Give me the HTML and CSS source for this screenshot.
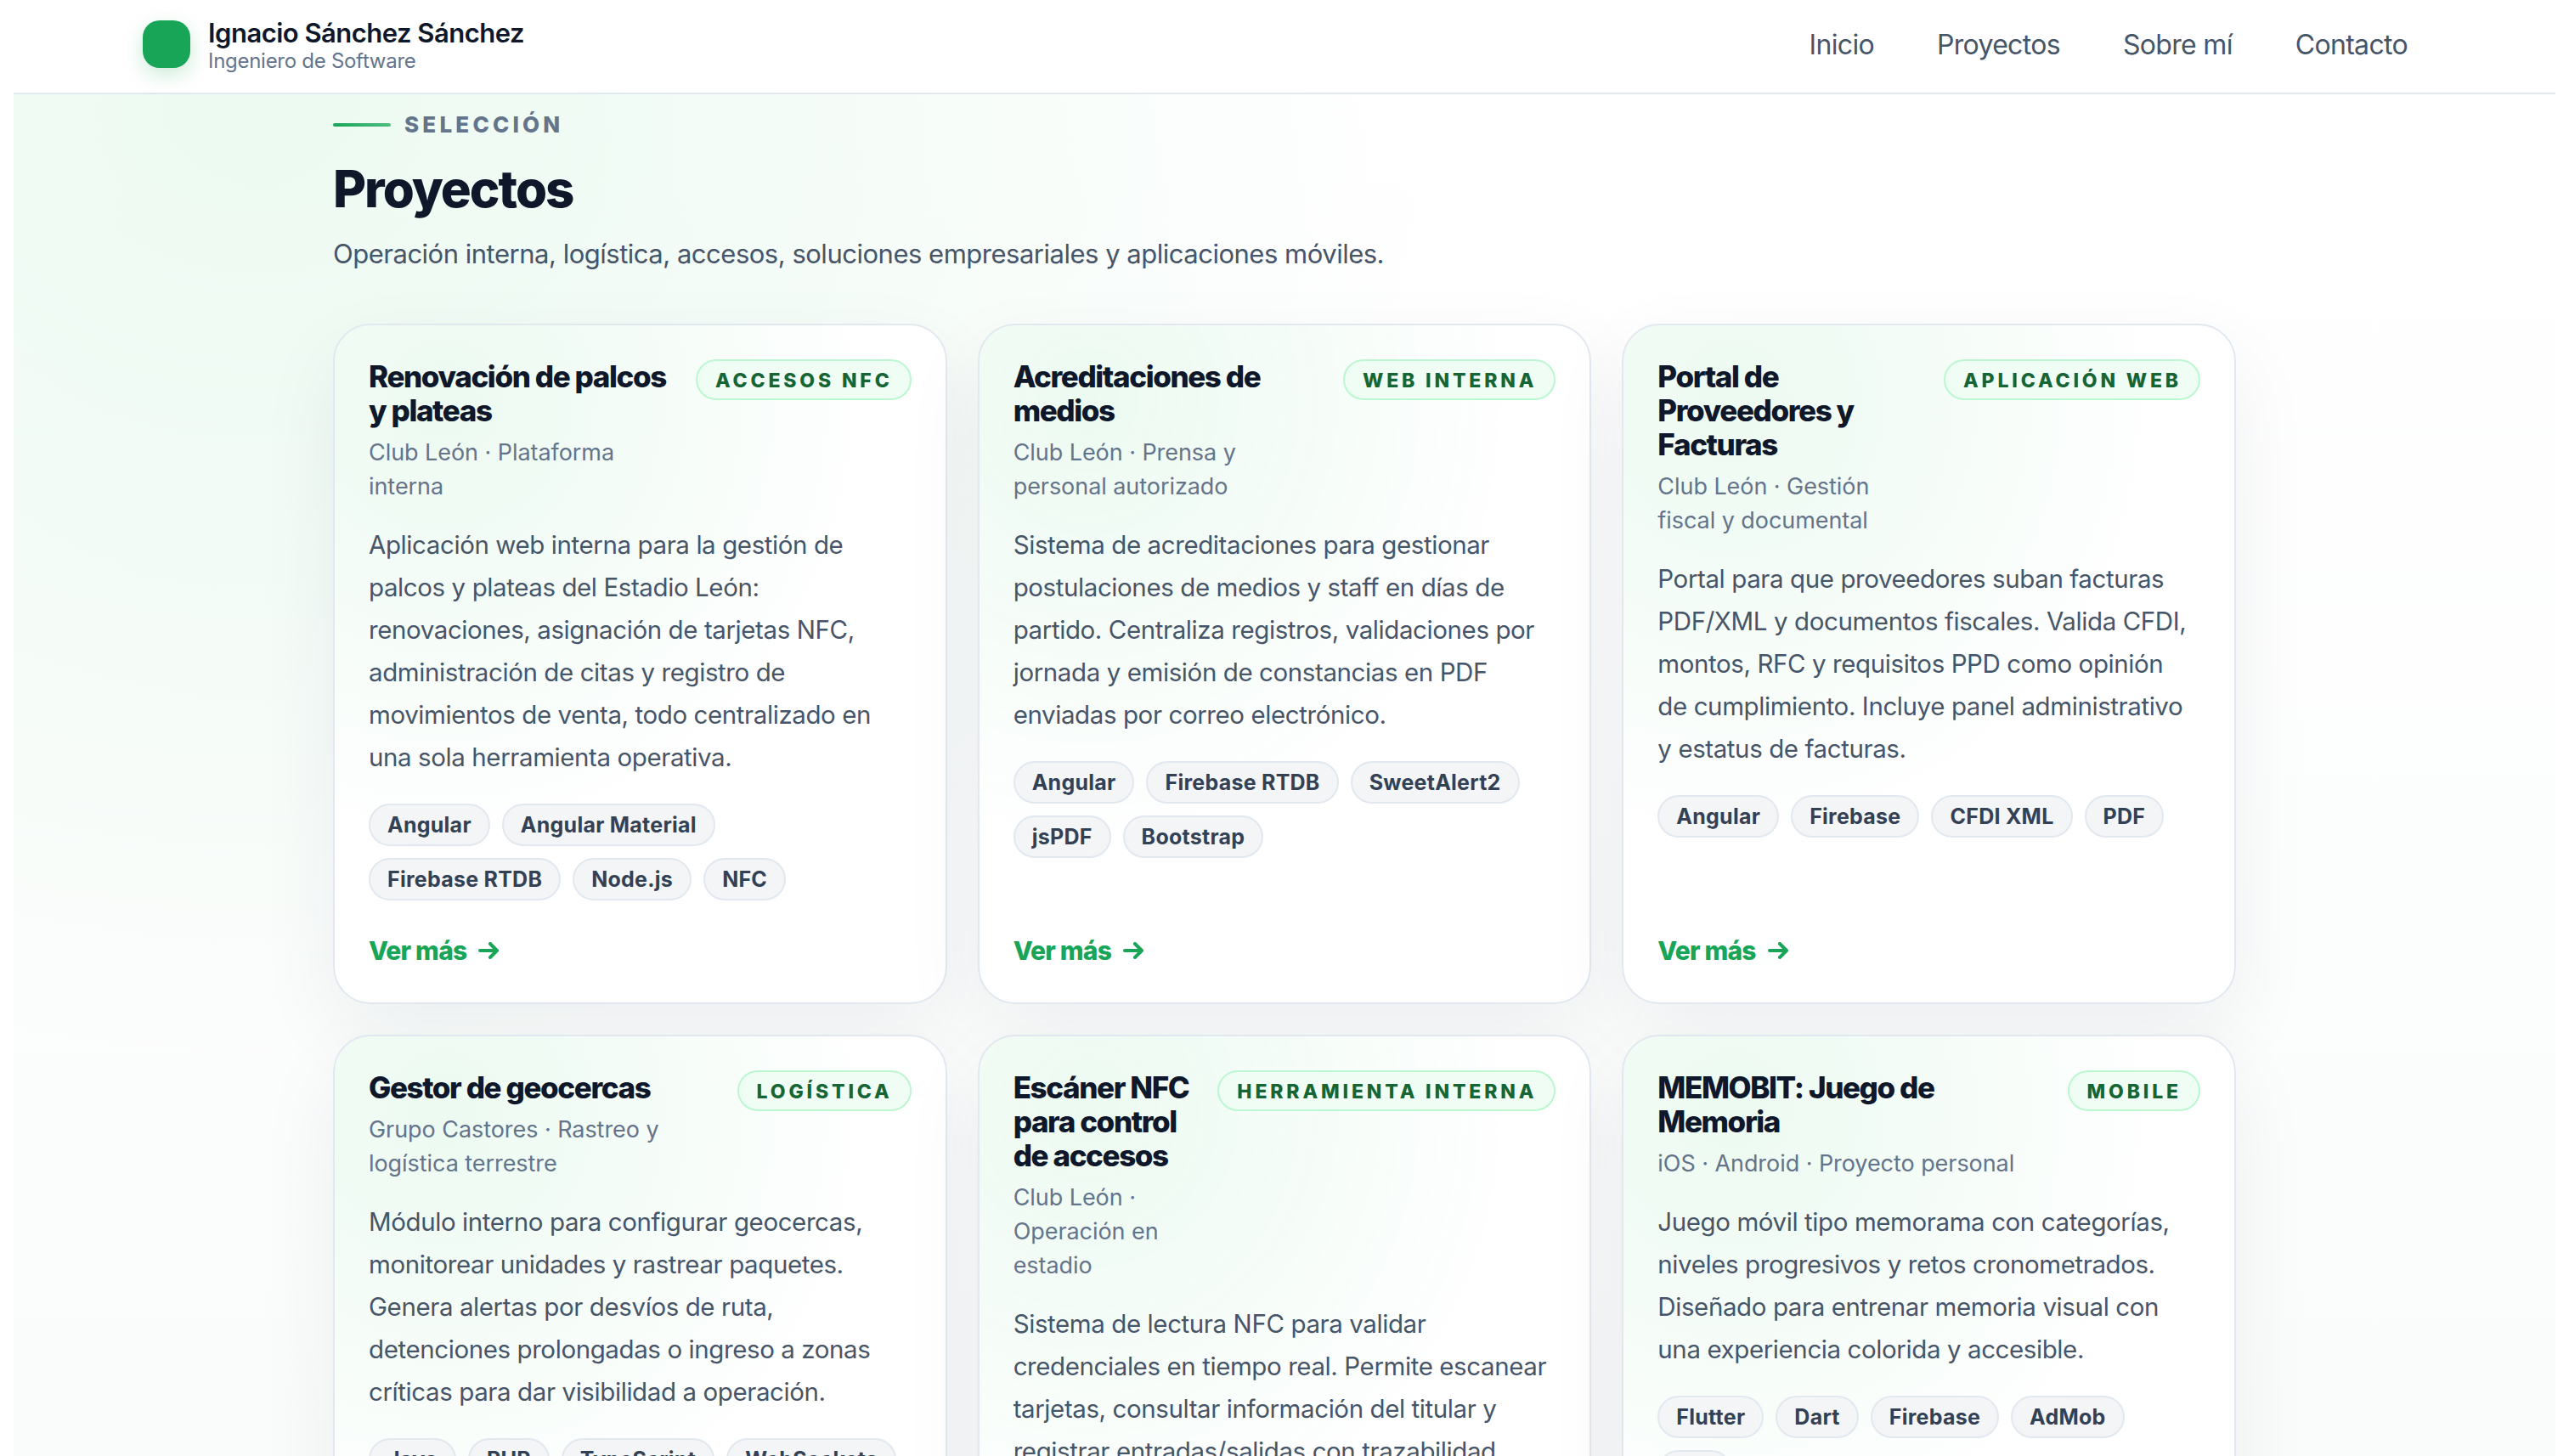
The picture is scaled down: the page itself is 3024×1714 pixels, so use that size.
FILE: index.html
```html
<!DOCTYPE html>
<html lang="es">
<head>
  <meta charset="UTF-8">
  <meta name="viewport" content="width=device-width, initial-scale=1.0">
  <title>Ignacio Sánchez Sánchez</title>
  <link rel="stylesheet" href="styles.css">
</head>
<body>
  <header class="header">
    <div class="brand">
      <span class="logo"></span>
      <div class="brand-text">
        <div class="brand-name">Ignacio Sánchez Sánchez</div>
        <div class="brand-role">Ingeniero de Software</div>
      </div>
    </div>
    <nav class="nav">
      <a href="#inicio">Inicio</a>
      <a href="#proyectos">Proyectos</a>
      <a href="#sobre-mi">Sobre mí</a>
      <a href="#contacto">Contacto</a>
    </nav>
  </header>

  <main class="main">
    <section class="container" id="proyectos">
      <div class="eyebrow">SELECCIÓN</div>
      <h2 class="title">Proyectos</h2>
      <p class="lead">Operación interna, logística, accesos, soluciones empresariales y aplicaciones móviles.</p>

      <div class="grid">
        <article class="card">
          <div class="card-top">
            <div>
              <h3>Renovación de palcos<br>y plateas</h3>
              <p class="meta">Club León · Plataforma<br>interna</p>
            </div>
            <span class="badge">ACCESOS NFC</span>
          </div>
          <p class="desc">Aplicación web interna para la gestión de<br>palcos y plateas del Estadio León:<br>renovaciones, asignación de tarjetas NFC,<br>administración de citas y registro de<br>movimientos de venta, todo centralizado en<br>una sola herramienta operativa.</p>
          <div class="chips">
            <span>Angular</span><span>Angular Material</span><span>Firebase RTDB</span><span>Node.js</span><span>NFC</span>
          </div>
          <a class="more" href="#">Ver más <svg viewBox="0 0 24 20"><path d="M2 10H22M14 2L22 10L14 18"/></svg></a>
        </article>

        <article class="card">
          <div class="card-top">
            <div>
              <h3>Acreditaciones de<br>medios</h3>
              <p class="meta">Club León · Prensa y<br>personal autorizado</p>
            </div>
            <span class="badge">WEB INTERNA</span>
          </div>
          <p class="desc">Sistema de acreditaciones para gestionar<br>postulaciones de medios y staff en días de<br>partido. Centraliza registros, validaciones por<br>jornada y emisión de constancias en PDF<br>enviadas por correo electrónico.</p>
          <div class="chips">
            <span>Angular</span><span>Firebase RTDB</span><span>SweetAlert2</span><span>jsPDF</span><span>Bootstrap</span>
          </div>
          <a class="more" href="#">Ver más <svg viewBox="0 0 24 20"><path d="M2 10H22M14 2L22 10L14 18"/></svg></a>
        </article>

        <article class="card">
          <div class="card-top">
            <div>
              <h3>Portal de<br>Proveedores y<br>Facturas</h3>
              <p class="meta">Club León · Gestión<br>fiscal y documental</p>
            </div>
            <span class="badge">APLICACIÓN WEB</span>
          </div>
          <p class="desc">Portal para que proveedores suban facturas<br>PDF/XML y documentos fiscales. Valida CFDI,<br>montos, RFC y requisitos PPD como opinión<br>de cumplimiento. Incluye panel administrativo<br>y estatus de facturas.</p>
          <div class="chips">
            <span>Angular</span><span>Firebase</span><span>CFDI XML</span><span>PDF</span>
          </div>
          <a class="more" href="#">Ver más <svg viewBox="0 0 24 20"><path d="M2 10H22M14 2L22 10L14 18"/></svg></a>
        </article>

        <article class="card">
          <div class="card-top">
            <div>
              <h3>Gestor de geocercas</h3>
              <p class="meta">Grupo Castores · Rastreo y<br>logística terrestre</p>
            </div>
            <span class="badge">LOGÍSTICA</span>
          </div>
          <p class="desc">Módulo interno para configurar geocercas,<br>monitorear unidades y rastrear paquetes.<br>Genera alertas por desvíos de ruta,<br>detenciones prolongadas o ingreso a zonas<br>críticas para dar visibilidad a operación.</p>
          <div class="chips">
            <span>Java</span><span>PHP</span><span>TypeScript</span><span>WebSockets</span>
          </div>
        </article>

        <article class="card">
          <div class="card-top">
            <div>
              <h3>Escáner NFC<br>para control<br>de accesos</h3>
              <p class="meta">Club León ·<br>Operación en<br>estadio</p>
            </div>
            <span class="badge">HERRAMIENTA INTERNA</span>
          </div>
          <p class="desc">Sistema de lectura NFC para validar<br>credenciales en tiempo real. Permite escanear<br>tarjetas, consultar información del titular y<br>registrar entradas/salidas con trazabilidad.</p>
        </article>

        <article class="card">
          <div class="card-top">
            <div>
              <h3>MEMOBIT: Juego de<br>Memoria</h3>
              <p class="meta">iOS · Android · Proyecto personal</p>
            </div>
            <span class="badge">MOBILE</span>
          </div>
          <p class="desc">Juego móvil tipo memorama con categorías,<br>niveles progresivos y retos cronometrados.<br>Diseñado para entrenar memoria visual con<br>una experiencia colorida y accesible.</p>
          <div class="chips">
            <span>Flutter</span><span>Dart</span><span>Firebase</span><span>AdMob</span><span>iOS</span>
          </div>
        </article>
      </div>
    </section>
  </main>
</body>
</html>
```

FILE: styles.css
```css
* {
  box-sizing: border-box;
}
html {
  overflow: hidden;
}
body {
  margin: 0 16px;
  height: 1714px;
  overflow: hidden;
  background: #fff;
  color: #0f172a;
  font-family: Inter, "Liberation Sans", sans-serif;
}
h2, h3, p {
  margin: 0;
}
a {
  text-decoration: none;
}

/* Encabezado */
.header {
  display: flex;
  justify-content: space-between;
  align-items: center;
  height: 111px;
  padding: 0 174px 5px 152px;
  border-bottom: 2px solid #e2e8f0;
}
.brand {
  display: flex;
  align-items: center;
  gap: 21px;
}
.brand-text {
  padding-top: 5px;
}
.logo {
  width: 56px;
  height: 56px;
  border-radius: 20px;
  background: #18a558;
  box-shadow: 0 8px 24px rgba(22, 163, 74, 0.22);
}
.brand-name {
  font-size: 31px;
  font-weight: 600;
  line-height: 35px;
  letter-spacing: -0.52px;
}
.brand-role {
  font-size: 24px;
  line-height: 32px;
  letter-spacing: -0.28px;
  color: #64748b;
}
.nav {
  display: flex;
  gap: 74px;
  padding-top: 2px;
}
.nav a {
  color: #475569;
  font-size: 32px;
  line-height: 40px;
  letter-spacing: -0.68px;
}

/* Sección de proyectos */
.main {
  height: 1603px;
  overflow: hidden;
  background:
    radial-gradient(1400px 1150px at 290px 0, rgba(34, 197, 94, 0.085), transparent),
    linear-gradient(180deg, #fff, #fafcfb);
}
.container {
  width: 2240px;
  margin: 0 auto;
  padding-top: 19px;
}
.eyebrow {
  display: flex;
  align-items: center;
  gap: 16px;
  color: #64748b;
  font-size: 26px;
  font-weight: 800;
  line-height: 34px;
  letter-spacing: 4.2px;
}
.eyebrow::before {
  content: "";
  width: 68px;
  height: 4px;
  border-radius: 2px;
  background: linear-gradient(90deg, #18a558, #4dbd80);
}
.title {
  margin-top: 22px;
  font-size: 60px;
  font-weight: 800;
  line-height: 72px;
  letter-spacing: -2px;
}
.lead {
  margin-top: 19px;
  color: #475569;
  font-size: 31px;
  line-height: 44px;
  letter-spacing: -0.49px;
}
.grid {
  display: grid;
  grid-template-columns: repeat(3, minmax(0, 1fr));
  gap: 36px;
  margin-top: 60px;
}

/* Tarjetas */
.card {
  display: flex;
  flex-direction: column;
  min-height: 801px;
  padding: 40px;
  border: 2px solid #e2e8f0;
  border-radius: 44px;
  background:
    radial-gradient(520px 540px at 128px 88px, rgba(34, 197, 94, 0.085), transparent),
    #fff;
  box-shadow: 0 36px 100px rgba(20, 30, 66, 0.06);
}
.card-top {
  display: flex;
  justify-content: space-between;
  align-items: flex-start;
}
.card-top > div {
  flex: none;
  width: 0;
  white-space: nowrap;
}
h3 {
  font-size: 35px;
  font-weight: 800;
  line-height: 40px;
  letter-spacing: -1.4px;
}
.meta {
  margin-top: 10px;
  color: #64748b;
  font-size: 27px;
  line-height: 40px;
  letter-spacing: -0.06px;
}
.badge {
  flex: none;
  height: 48px;
  padding: 0 20px 0 21px;
  border: 2px solid #bbf7d0;
  border-radius: 24px;
  background: #f0fdf4;
  color: #166534;
  font-size: 23px;
  font-weight: 800;
  line-height: 46px;
  letter-spacing: 3.85px;
}
.desc {
  margin-top: 23px;
  color: #475569;
  font-size: 29.5px;
  line-height: 50px;
  letter-spacing: -0.41px;
  white-space: nowrap;
}
.chips {
  display: flex;
  flex-wrap: wrap;
  gap: 14px;
  margin-top: 30px;
}
.chips span {
  height: 50px;
  padding: 0 20px;
  border: 2px solid #e2e8f0;
  border-radius: 25px;
  background: #f3f5f7;
  color: #334155;
  font-size: 25px;
  font-weight: 700;
  line-height: 46px;
  letter-spacing: 0.25px;
}
.more {
  display: flex;
  align-items: center;
  gap: 14px;
  margin: auto 0 -1px;
  color: #18a558;
  font-size: 30px;
  font-weight: 800;
  line-height: 44px;
  letter-spacing: -0.8px;
}
.more svg {
  width: 24px;
  height: 20px;
  fill: none;
  stroke: currentColor;
  stroke-width: 4;
  stroke-linecap: round;
  stroke-linejoin: round;
}
```
